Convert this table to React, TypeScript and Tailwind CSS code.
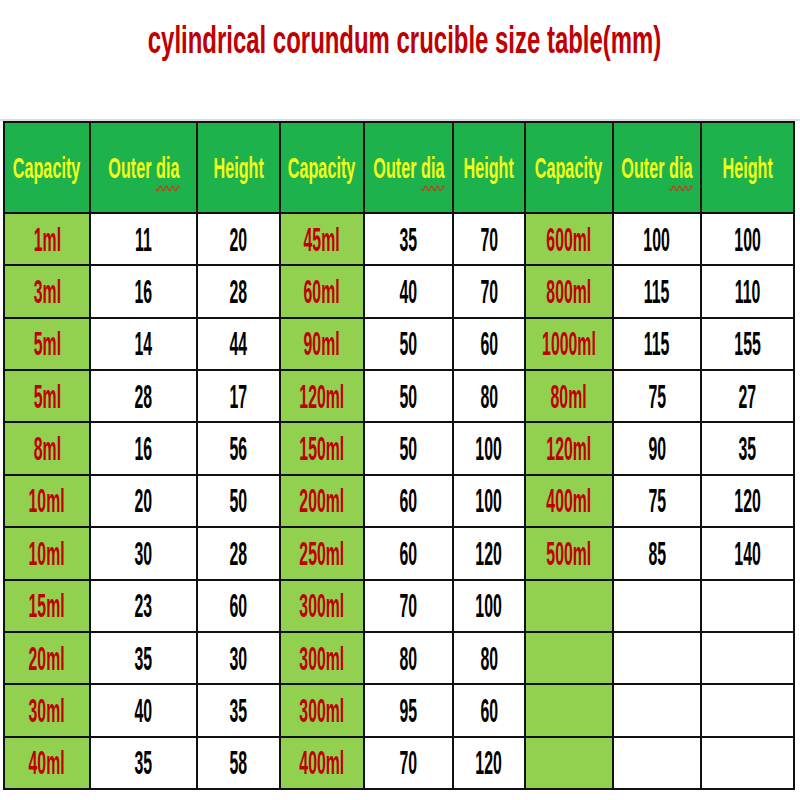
import React from "react";

type Row = [string, string, string];

const g1: Row[] = [
  ["1ml", "11", "20"],
  ["3ml", "16", "28"],
  ["5ml", "14", "44"],
  ["5ml", "28", "17"],
  ["8ml", "16", "56"],
  ["10ml", "20", "50"],
  ["10ml", "30", "28"],
  ["15ml", "23", "60"],
  ["20ml", "35", "30"],
  ["30ml", "40", "35"],
  ["40ml", "35", "58"],
];
const g2: Row[] = [
  ["45ml", "35", "70"],
  ["60ml", "40", "70"],
  ["90ml", "50", "60"],
  ["120ml", "50", "80"],
  ["150ml", "50", "100"],
  ["200ml", "60", "100"],
  ["250ml", "60", "120"],
  ["300ml", "70", "100"],
  ["300ml", "80", "80"],
  ["300ml", "95", "60"],
  ["400ml", "70", "120"],
];
const g3: Row[] = [
  ["600ml", "100", "100"],
  ["800ml", "115", "110"],
  ["1000ml", "115", "155"],
  ["80ml", "75", "27"],
  ["120ml", "90", "35"],
  ["400ml", "75", "120"],
  ["500ml", "85", "140"],
  ["", "", ""],
  ["", "", ""],
  ["", "", ""],
  ["", "", ""],
];

function HeaderCell({ label }: { label: string }) {
  return (
    <div className="flex items-center justify-center bg-[#1db24b]">
      <span className="inline-block scale-x-[0.54] whitespace-nowrap text-[30px] font-bold leading-none text-[#f2ff1c]">
        {label === "Outer dia" ? (
          <>
            Outer{" "}
            <span className="underline decoration-wavy decoration-[#c0401c] decoration-[1.5px] underline-offset-[7px]">
              dia
            </span>
          </>
        ) : (
          label
        )}
      </span>
    </div>
  );
}

function CapCell({ v }: { v: string }) {
  return (
    <div className="flex items-center justify-center bg-[#92d050]">
      <span className="inline-block scale-x-[0.48] whitespace-nowrap text-[33px] font-bold leading-none text-[#c00000]">
        {v}
      </span>
    </div>
  );
}

function NumCell({ v }: { v: string }) {
  return (
    <div className="flex items-center justify-center bg-white">
      <span className="inline-block scale-x-[0.48] whitespace-nowrap text-[33px] font-bold leading-none text-black">
        {v}
      </span>
    </div>
  );
}

export default function App() {
  const headers = [
    "Capacity",
    "Outer dia",
    "Height",
    "Capacity",
    "Outer dia",
    "Height",
    "Capacity",
    "Outer dia",
    "Height",
  ];
  return (
    <div className="h-[800px] w-[800px] overflow-hidden bg-white font-['Liberation_Sans',Arial,sans-serif]">
      <div className="flex h-[119px] justify-center pl-[10px] pt-[21px]">
        <span className="inline-block h-[38px] scale-x-[0.63] whitespace-nowrap text-[38px] font-bold leading-[38px] text-[#c00000]">
          cylindrical corundum crucible size table(mm)
        </span>
      </div>
      <div className="h-[2px] w-full bg-[#dedede]" />
      <div className="ml-[3px] grid h-[669px] w-fit grid-cols-[84px_105px_81px_82px_87px_70px_86px_86px_91px] grid-rows-[89px_repeat(11,minmax(0,1fr))] gap-[2px] bg-[#111] p-[2px]">
        {headers.map((h, i) => (
          <HeaderCell key={"h" + i} label={h} />
        ))}
        {g1.map((r, i) => (
          <React.Fragment key={"r" + i}>
            <CapCell v={r[0]} />
            <NumCell v={r[1]} />
            <NumCell v={r[2]} />
            <CapCell v={g2[i][0]} />
            <NumCell v={g2[i][1]} />
            <NumCell v={g2[i][2]} />
            <CapCell v={g3[i][0]} />
            <NumCell v={g3[i][1]} />
            <NumCell v={g3[i][2]} />
          </React.Fragment>
        ))}
      </div>
    </div>
  );
}
